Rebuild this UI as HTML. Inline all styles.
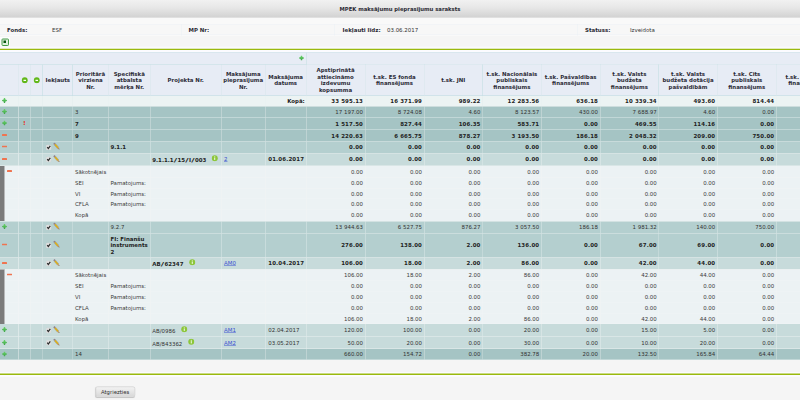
<!DOCTYPE html><html lang="lv"><head><meta charset="utf-8"><title>MPEK maksājumu pieprasījumu saraksts</title><style>
html,body{margin:0;padding:0;background:#f4f4f4;}
body{width:800px;height:400px;overflow:hidden;position:relative;font-family:"DejaVu Sans","Liberation Sans",sans-serif;}
#w{position:absolute;left:0;top:0;width:1600px;height:800px;transform:scale(0.5);transform-origin:0 0;font-size:10.9px;color:#333;overflow:hidden;background:#f5f5f5;}
#tb{position:absolute;left:0;top:0;width:1600px;height:35px;font-size:10.6px;background:linear-gradient(#f1f1f1,#e7e7e7 45%,#d3d3d3);border-bottom:1px solid #cbcbcb;box-sizing:border-box;text-align:center;font-weight:bold;line-height:35px;color:#2a2a33;}
#fl{position:absolute;left:0;top:36px;width:1600px;height:62px;background:linear-gradient(#f9f9f9,#f9f9f9 35px,#f5f5f5 36px);}
#fr{position:absolute;left:0;top:12px;width:1600px;height:22px;box-sizing:border-box;border-top:1px solid #edf1f6;border-bottom:1px solid #edf1f6;background:#f7f7f7}
#fl span{position:absolute;top:16px;line-height:16px;white-space:nowrap;}
#fl b{color:#2a2a33}
.vd{position:absolute;top:12px;width:1px;height:23px;background:#eaf0f5;}
#icb{position:absolute;left:0;top:74px;width:20px;height:19px;background:#fdfdfd}
#ic{position:absolute;left:2.5px;top:77px;width:15px;height:14.5px;box-sizing:border-box;border:2.6px solid #449a49;background:#dff0df;border-radius:2.5px;}
#ic i{position:absolute;left:2.6px;top:2.4px;width:4.6px;height:4.6px;background:#07560f;}
.gl{position:absolute;left:0;width:1600px;height:3.5px;background:#9ab90e;}
table{position:absolute;left:0;top:104px;border-collapse:separate;border-spacing:0;table-layout:fixed;width:1675px;}
td,th{padding:0;margin:0;box-sizing:border-box;overflow:hidden;border-right:1px solid rgba(255,255,255,.42);border-bottom:1px solid rgba(255,255,255,.62);line-height:13px;vertical-align:middle;white-space:nowrap;font-weight:normal;}
th{background:#e7ecf5;font-weight:bold;text-align:center;color:#2b2b36;border-right:1px solid #bddce0;border-bottom:1px solid #badadf;}
tr.h2 th{padding-top:1px}
tr.h1 th{border-bottom:1px solid #bddce0;border-top:1px solid #cbe3e7;}
td.n{text-align:right;padding-right:3.5px;}
td.t{text-align:left;padding-left:4px;}
tr.b td{font-weight:bold;color:#222;}
tr.tot td{background:#ecf3f3;border-right-color:#e2edee;}
tr.l1 td{background:#a5c4c4;}
tr.l2 td{background:#b4cfcf;}
tr.l3 td{background:#c7dbdb;}
tr.d td{background:#ecf2f4;border-right-color:rgba(255,255,255,.25);border-bottom-color:rgba(255,255,255,.25);color:#3a3a3a;}
td.e{position:relative;}
.pl{position:absolute;left:3.5px;top:50%;margin-top:-6.2px;}
.mi{position:absolute;left:3.5px;top:50%;margin-top:-3px;}
tr.d .mi{left:13.5px;}
.bar{position:absolute;left:0;width:9.5px;background:#7b7b7b;border-right:1px solid #f4f7f8;box-sizing:border-box}
.cb{position:absolute;left:5.5px;top:50%;margin-top:-5.5px}
.pe{position:absolute;left:19.5px;top:50%;margin-top:-9px}
.inf{display:inline-block;vertical-align:middle;margin:-6.5px 0 -6.5px 11px;position:relative;top:-4px}
.sl{display:inline-block;transform:scaleX(1.7);margin:0 1.9px}
td.p{padding-left:3.5px;padding-top:3px}
.ci{display:inline-block;vertical-align:middle;position:relative;left:0.6px;top:-0.5px}
.ex{color:#e8301c;font-weight:bold;font-size:12px;position:relative;top:-1px}
td.c{text-align:center}
a{color:#3a50d0;text-decoration:underline;font-weight:normal}
tr.b td.n,tr.b td.dt{letter-spacing:0.28px}
td.dt{padding-left:5.5px}
td.lk{padding-left:5px}
.r{display:block;text-align:right;padding-right:2px}
#btn{position:absolute;left:191px;top:772.5px;width:78.5px;height:21px;box-sizing:border-box;border:1px solid #c2c2c2;border-radius:4px;background:linear-gradient(#f3f3f3,#d8d8d8);text-align:center;line-height:19px;font-size:10.6px;color:#2e2e2e;box-shadow:0 1px 1.5px rgba(0,0,0,.2);}
</style></head><body><div id="w">
<svg width="0" height="0" style="position:absolute"><defs><linearGradient id="gp" x1="0" y1="0" x2="0" y2="1"><stop offset="0" stop-color="#6ad46a"/><stop offset="1" stop-color="#3fa548"/></linearGradient></defs></svg>
<div id="tb">MPEK maksājumu pieprasījumu saraksts</div>
<div id="fl"><div id="fr"></div><span style="left:14px"><b>Fonds:</b></span><span style="left:104px">ESF</span><span style="left:377px"><b>MP Nr:</b></span><span style="left:685px"><b>Iekļauti līdz:</b></span><span style="left:774px">03.06.2017</span><span style="left:1170px"><b>Statuss:</b></span><span style="left:1260px">Izveidota</span><div class="vd" style="left:362px"></div><div class="vd" style="left:669px"></div><div class="vd" style="left:1154px"></div></div>
<div id="icb"></div><div id="ic"><i></i></div>
<div class="gl" style="top:97.1px;height:3px"></div><div style="position:absolute;left:0;top:100.1px;width:1600px;height:4px;background:#fbfbff"></div><div style="position:absolute;left:0;top:93px;width:1600px;height:4.1px;background:#fafafc"></div>
<table><colgroup><col style="width:37px"><col style="width:24px"><col style="width:25px"><col style="width:60px"><col style="width:71px"><col style="width:84px"><col style="width:142px"><col style="width:88px"><col style="width:81.5px"><col style="width:118px"><col style="width:118px"><col style="width:117px"><col style="width:117.5px"><col style="width:117.5px"><col style="width:117.5px"><col style="width:117px"><col style="width:118px"><col style="width:122px"></colgroup>
<tr class="h1" style="height:25px"><th colspan="9" style="position:relative"><svg style="position:absolute;left:598px;top:6px" width="10" height="10" viewBox="0 0 10 10"><path d="M3.8 0.2h2.4l0.6 3 3 0.6v2.4l-3 0.6-0.6 3H3.8l-0.6-3-3-0.6V3.8l3-0.6z" fill="url(#gp)"/></svg></th><th colspan="9"></th></tr>
<tr class="h2" style="height:62.5px"><th></th><th><svg class="ci" width="13" height="13" viewBox="0 0 13 13"><circle cx="6.5" cy="6.5" r="5.9" fill="#62b81a"/><rect x="3.9" y="5.4" width="5.2" height="2.4" rx="0.6" fill="#fff"/></svg></th><th><svg class="ci" width="13" height="13" viewBox="0 0 13 13"><circle cx="6.5" cy="6.5" r="5.9" fill="#62b81a"/><rect x="3.9" y="5.4" width="5.2" height="2.4" rx="0.6" fill="#fff"/></svg></th><th>Iekļauts</th><th>Prioritārā<br>virziena<br>Nr.</th><th>Specifiskā<br>atbalsta<br>mērķa Nr.</th><th>Projekta Nr.</th><th>Maksājuma<br>pieprasījuma<br>Nr.</th><th>Maksājuma<br>datums</th><th>Apstiprinātā<br>attiecināmo<br>izdevumu<br>kopsumma</th><th>t.sk. ES fonda<br>finansējums</th><th>t.sk. JNI</th><th>t.sk. Nacionālais<br>publiskais<br>finansējums</th><th>t.sk. Pašvaldības<br>finansējums</th><th>t.sk. Valsts<br>budžeta<br>finansējums</th><th>t.sk. Valsts<br>budžeta dotācija<br>pašvaldībām</th><th>t.sk. Cits<br>publiskais<br>finansējums</th><th>t.sk. Privātais<br>finansējums</th></tr>
<tr class="tot b" style="height:21.5px"><td class="e"><svg class="pl" width="10" height="10" viewBox="0 0 10 10"><path d="M3.8 0.2h2.4l0.6 3 3 0.6v2.4l-3 0.6-0.6 3H3.8l-0.6-3-3-0.6V3.8l3-0.6z" fill="url(#gp)"/></svg></td><td class="c"></td><td></td><td class="e"></td><td class="t"></td><td class="t"></td><td class="t p"></td><td class="t lk"></td><td><span class="r">Kopā:</span></td><td class="n">33 595.13</td><td class="n">16 371.99</td><td class="n">989.22</td><td class="n">12 283.56</td><td class="n">636.18</td><td class="n">10 339.34</td><td class="n">493.60</td><td class="n">814.44</td><td class="n"></td></tr>
<tr class="l1" style="height:23px"><td class="e"><svg class="pl" width="10" height="10" viewBox="0 0 10 10"><path d="M3.8 0.2h2.4l0.6 3 3 0.6v2.4l-3 0.6-0.6 3H3.8l-0.6-3-3-0.6V3.8l3-0.6z" fill="url(#gp)"/></svg></td><td class="c"></td><td></td><td class="e"></td><td class="t">3</td><td class="t"></td><td class="t p"></td><td class="t lk"></td><td class="t dt"></td><td class="n">17 197.00</td><td class="n">8 724.08</td><td class="n">4.60</td><td class="n">8 123.57</td><td class="n">430.00</td><td class="n">7 688.97</td><td class="n">4.60</td><td class="n">0.00</td><td class="n"></td></tr>
<tr class="l1 b" style="height:24px"><td class="e"><svg class="pl" width="10" height="10" viewBox="0 0 10 10"><path d="M3.8 0.2h2.4l0.6 3 3 0.6v2.4l-3 0.6-0.6 3H3.8l-0.6-3-3-0.6V3.8l3-0.6z" fill="url(#gp)"/></svg></td><td class="c"><span class="ex">!</span></td><td></td><td class="e"></td><td class="t">7</td><td class="t"></td><td class="t p"></td><td class="t lk"></td><td class="t dt"></td><td class="n">1 517.50</td><td class="n">827.44</td><td class="n">106.35</td><td class="n">583.71</td><td class="n">0.00</td><td class="n">469.55</td><td class="n">114.16</td><td class="n">0.00</td><td class="n"></td></tr>
<tr class="l1 b" style="height:23px"><td class="e"><svg class="mi" width="10" height="4" viewBox="0 0 10 4"><rect x="0" y="0" width="10" height="3.8" rx="1" fill="#ef7450"/></svg></td><td class="c"></td><td></td><td class="e"></td><td class="t">9</td><td class="t"></td><td class="t p"></td><td class="t lk"></td><td class="t dt"></td><td class="n">14 220.63</td><td class="n">6 665.75</td><td class="n">878.27</td><td class="n">3 193.50</td><td class="n">186.18</td><td class="n">2 048.32</td><td class="n">209.00</td><td class="n">750.00</td><td class="n"></td></tr>
<tr class="l2 b" style="height:23.5px"><td class="e"><svg class="mi" width="10" height="4" viewBox="0 0 10 4"><rect x="0" y="0" width="10" height="3.8" rx="1" fill="#ef7450"/></svg></td><td class="c"></td><td></td><td class="e"><svg class="cb" width="11" height="11" viewBox="0 0 11 11"><rect x="0.25" y="0.25" width="10.5" height="10.5" rx="2" fill="#dfdfdf" stroke="#cfd6d6" stroke-width="0.5"/><path d="M2.4 5.4l2.2 2.6 4-5.4" fill="none" stroke="#2b2b2b" stroke-width="2.4"/></svg><svg class="pe" width="14" height="15" viewBox="0 0 14 15"><g transform="translate(2.2,1.8) rotate(48.8)"><rect x="-0.5" y="-1.8" width="3" height="3.6" fill="#93808a"/><rect x="2.5" y="-1.9" width="9.3" height="3.8" fill="#e6bc1e" stroke="#7f8cb4" stroke-width="0.7"/><rect x="2.5" y="-0.5" width="9.3" height="1" fill="#d59a10"/><path d="M11.8 -1.9L16 0 11.8 1.9z" fill="#c79a62"/><path d="M14.3 -0.9L16 0 14.3 0.9z" fill="#444"/></g></svg></td><td class="t"></td><td class="t">9.1.1</td><td class="t p"></td><td class="t lk"></td><td class="t dt"></td><td class="n">0.00</td><td class="n">0.00</td><td class="n">0.00</td><td class="n">0.00</td><td class="n">0.00</td><td class="n">0.00</td><td class="n">0.00</td><td class="n">0.00</td><td class="n"></td></tr>
<tr class="l3 b" style="height:25.5px"><td class="e"><svg class="mi" width="10" height="4" viewBox="0 0 10 4"><rect x="0" y="0" width="10" height="3.8" rx="1" fill="#ef7450"/></svg></td><td class="c"></td><td></td><td class="e"><svg class="cb" width="11" height="11" viewBox="0 0 11 11"><rect x="0.25" y="0.25" width="10.5" height="10.5" rx="2" fill="#dfdfdf" stroke="#cfd6d6" stroke-width="0.5"/><path d="M2.4 5.4l2.2 2.6 4-5.4" fill="none" stroke="#2b2b2b" stroke-width="2.4"/></svg><svg class="pe" width="14" height="15" viewBox="0 0 14 15"><g transform="translate(2.2,1.8) rotate(48.8)"><rect x="-0.5" y="-1.8" width="3" height="3.6" fill="#93808a"/><rect x="2.5" y="-1.9" width="9.3" height="3.8" fill="#e6bc1e" stroke="#7f8cb4" stroke-width="0.7"/><rect x="2.5" y="-0.5" width="9.3" height="1" fill="#d59a10"/><path d="M11.8 -1.9L16 0 11.8 1.9z" fill="#c79a62"/><path d="M14.3 -0.9L16 0 14.3 0.9z" fill="#444"/></g></svg></td><td class="t"></td><td class="t"></td><td class="t p">9.1.1.1<span class="sl">/</span>15<span class="sl">/</span>I<span class="sl">/</span>003<svg class="inf" width="13" height="13" viewBox="0 0 13 13"><circle cx="6.5" cy="6.5" r="6" fill="#8cc63a"/><rect x="5.6" y="5.2" width="1.8" height="4.6" fill="#fff"/><rect x="5.6" y="2.8" width="1.8" height="1.7" fill="#fff"/></svg></td><td class="t lk"><a>2</a></td><td class="t dt">01.06.2017</td><td class="n">0.00</td><td class="n">0.00</td><td class="n">0.00</td><td class="n">0.00</td><td class="n">0.00</td><td class="n">0.00</td><td class="n">0.00</td><td class="n">0.00</td><td class="n"></td></tr>
<tr class="d" style="height:23px"><td class="e"><svg class="mi" width="10" height="4" viewBox="0 0 10 4"><rect x="0" y="0" width="10" height="3.8" rx="1" fill="#ef7450"/></svg></td><td class="c"></td><td></td><td class="e"></td><td class="t">Sākotnējais</td><td class="t"></td><td class="t p"></td><td class="t lk"></td><td class="t dt"></td><td class="n">0.00</td><td class="n">0.00</td><td class="n">0.00</td><td class="n">0.00</td><td class="n">0.00</td><td class="n">0.00</td><td class="n">0.00</td><td class="n">0.00</td><td class="n"></td></tr>
<tr class="d" style="height:21.7px"><td class="e"></td><td class="c"></td><td></td><td class="e"></td><td class="t">SEI</td><td class="t">Pamatojums:</td><td class="t p"></td><td class="t lk"></td><td class="t dt"></td><td class="n">0.00</td><td class="n">0.00</td><td class="n">0.00</td><td class="n">0.00</td><td class="n">0.00</td><td class="n">0.00</td><td class="n">0.00</td><td class="n">0.00</td><td class="n"></td></tr>
<tr class="d" style="height:21.7px"><td class="e"></td><td class="c"></td><td></td><td class="e"></td><td class="t">VI</td><td class="t">Pamatojums:</td><td class="t p"></td><td class="t lk"></td><td class="t dt"></td><td class="n">0.00</td><td class="n">0.00</td><td class="n">0.00</td><td class="n">0.00</td><td class="n">0.00</td><td class="n">0.00</td><td class="n">0.00</td><td class="n">0.00</td><td class="n"></td></tr>
<tr class="d" style="height:21.7px"><td class="e"></td><td class="c"></td><td></td><td class="e"></td><td class="t">CFLA</td><td class="t">Pamatojums:</td><td class="t p"></td><td class="t lk"></td><td class="t dt"></td><td class="n">0.00</td><td class="n">0.00</td><td class="n">0.00</td><td class="n">0.00</td><td class="n">0.00</td><td class="n">0.00</td><td class="n">0.00</td><td class="n">0.00</td><td class="n"></td></tr>
<tr class="d" style="height:22.5px"><td class="e"></td><td class="c"></td><td></td><td class="e"></td><td class="t">Kopā</td><td class="t"></td><td class="t p"></td><td class="t lk"></td><td class="t dt"></td><td class="n">0.00</td><td class="n">0.00</td><td class="n">0.00</td><td class="n">0.00</td><td class="n">0.00</td><td class="n">0.00</td><td class="n">0.00</td><td class="n">0.00</td><td class="n"></td></tr>
<tr class="l2" style="height:24px"><td class="e"><svg class="pl" width="10" height="10" viewBox="0 0 10 10"><path d="M3.8 0.2h2.4l0.6 3 3 0.6v2.4l-3 0.6-0.6 3H3.8l-0.6-3-3-0.6V3.8l3-0.6z" fill="url(#gp)"/></svg></td><td class="c"></td><td></td><td class="e"><svg class="cb" width="11" height="11" viewBox="0 0 11 11"><rect x="0.25" y="0.25" width="10.5" height="10.5" rx="2" fill="#dfdfdf" stroke="#cfd6d6" stroke-width="0.5"/><path d="M2.4 5.4l2.2 2.6 4-5.4" fill="none" stroke="#2b2b2b" stroke-width="2.4"/></svg><svg class="pe" width="14" height="15" viewBox="0 0 14 15"><g transform="translate(2.2,1.8) rotate(48.8)"><rect x="-0.5" y="-1.8" width="3" height="3.6" fill="#93808a"/><rect x="2.5" y="-1.9" width="9.3" height="3.8" fill="#e6bc1e" stroke="#7f8cb4" stroke-width="0.7"/><rect x="2.5" y="-0.5" width="9.3" height="1" fill="#d59a10"/><path d="M11.8 -1.9L16 0 11.8 1.9z" fill="#c79a62"/><path d="M14.3 -0.9L16 0 14.3 0.9z" fill="#444"/></g></svg></td><td class="t"></td><td class="t">9.2.7</td><td class="t p"></td><td class="t lk"></td><td class="t dt"></td><td class="n">13 944.63</td><td class="n">6 527.75</td><td class="n">876.27</td><td class="n">3 057.50</td><td class="n">186.18</td><td class="n">1 981.32</td><td class="n">140.00</td><td class="n">750.00</td><td class="n"></td></tr>
<tr class="l2 b" style="height:48.5px"><td class="e"><svg class="mi" width="10" height="4" viewBox="0 0 10 4"><rect x="0" y="0" width="10" height="3.8" rx="1" fill="#ef7450"/></svg></td><td class="c"></td><td></td><td class="e"><svg class="cb" width="11" height="11" viewBox="0 0 11 11"><rect x="0.25" y="0.25" width="10.5" height="10.5" rx="2" fill="#dfdfdf" stroke="#cfd6d6" stroke-width="0.5"/><path d="M2.4 5.4l2.2 2.6 4-5.4" fill="none" stroke="#2b2b2b" stroke-width="2.4"/></svg><svg class="pe" width="14" height="15" viewBox="0 0 14 15"><g transform="translate(2.2,1.8) rotate(48.8)"><rect x="-0.5" y="-1.8" width="3" height="3.6" fill="#93808a"/><rect x="2.5" y="-1.9" width="9.3" height="3.8" fill="#e6bc1e" stroke="#7f8cb4" stroke-width="0.7"/><rect x="2.5" y="-0.5" width="9.3" height="1" fill="#d59a10"/><path d="M11.8 -1.9L16 0 11.8 1.9z" fill="#c79a62"/><path d="M14.3 -0.9L16 0 14.3 0.9z" fill="#444"/></g></svg></td><td class="t"></td><td class="t">FI: Finanšu<br>instruments<br>2</td><td class="t p"></td><td class="t lk"></td><td class="t dt"></td><td class="n">276.00</td><td class="n">138.00</td><td class="n">2.00</td><td class="n">136.00</td><td class="n">0.00</td><td class="n">67.00</td><td class="n">69.00</td><td class="n">0.00</td><td class="n"></td></tr>
<tr class="l3 b" style="height:24px"><td class="e"><svg class="mi" width="10" height="4" viewBox="0 0 10 4"><rect x="0" y="0" width="10" height="3.8" rx="1" fill="#ef7450"/></svg></td><td class="c"></td><td></td><td class="e"><svg class="cb" width="11" height="11" viewBox="0 0 11 11"><rect x="0.25" y="0.25" width="10.5" height="10.5" rx="2" fill="#dfdfdf" stroke="#cfd6d6" stroke-width="0.5"/><path d="M2.4 5.4l2.2 2.6 4-5.4" fill="none" stroke="#2b2b2b" stroke-width="2.4"/></svg><svg class="pe" width="14" height="15" viewBox="0 0 14 15"><g transform="translate(2.2,1.8) rotate(48.8)"><rect x="-0.5" y="-1.8" width="3" height="3.6" fill="#93808a"/><rect x="2.5" y="-1.9" width="9.3" height="3.8" fill="#e6bc1e" stroke="#7f8cb4" stroke-width="0.7"/><rect x="2.5" y="-0.5" width="9.3" height="1" fill="#d59a10"/><path d="M11.8 -1.9L16 0 11.8 1.9z" fill="#c79a62"/><path d="M14.3 -0.9L16 0 14.3 0.9z" fill="#444"/></g></svg></td><td class="t"></td><td class="t"></td><td class="t p">AB<span class="sl">/</span>62347<svg class="inf" width="13" height="13" viewBox="0 0 13 13"><circle cx="6.5" cy="6.5" r="6" fill="#8cc63a"/><rect x="5.6" y="5.2" width="1.8" height="4.6" fill="#fff"/><rect x="5.6" y="2.8" width="1.8" height="1.7" fill="#fff"/></svg></td><td class="t lk"><a>AM0</a></td><td class="t dt">10.04.2017</td><td class="n">106.00</td><td class="n">18.00</td><td class="n">2.00</td><td class="n">86.00</td><td class="n">0.00</td><td class="n">42.00</td><td class="n">44.00</td><td class="n">0.00</td><td class="n"></td></tr>
<tr class="d" style="height:23px"><td class="e"><svg class="mi" width="10" height="4" viewBox="0 0 10 4"><rect x="0" y="0" width="10" height="3.8" rx="1" fill="#ef7450"/></svg></td><td class="c"></td><td></td><td class="e"></td><td class="t">Sākotnējais</td><td class="t"></td><td class="t p"></td><td class="t lk"></td><td class="t dt"></td><td class="n">106.00</td><td class="n">18.00</td><td class="n">2.00</td><td class="n">86.00</td><td class="n">0.00</td><td class="n">42.00</td><td class="n">44.00</td><td class="n">0.00</td><td class="n"></td></tr>
<tr class="d" style="height:21.9px"><td class="e"></td><td class="c"></td><td></td><td class="e"></td><td class="t">SEI</td><td class="t">Pamatojums:</td><td class="t p"></td><td class="t lk"></td><td class="t dt"></td><td class="n">0.00</td><td class="n">0.00</td><td class="n">0.00</td><td class="n">0.00</td><td class="n">0.00</td><td class="n">0.00</td><td class="n">0.00</td><td class="n">0.00</td><td class="n"></td></tr>
<tr class="d" style="height:21.9px"><td class="e"></td><td class="c"></td><td></td><td class="e"></td><td class="t">VI</td><td class="t">Pamatojums:</td><td class="t p"></td><td class="t lk"></td><td class="t dt"></td><td class="n">0.00</td><td class="n">0.00</td><td class="n">0.00</td><td class="n">0.00</td><td class="n">0.00</td><td class="n">0.00</td><td class="n">0.00</td><td class="n">0.00</td><td class="n"></td></tr>
<tr class="d" style="height:21.9px"><td class="e"></td><td class="c"></td><td></td><td class="e"></td><td class="t">CFLA</td><td class="t">Pamatojums:</td><td class="t p"></td><td class="t lk"></td><td class="t dt"></td><td class="n">0.00</td><td class="n">0.00</td><td class="n">0.00</td><td class="n">0.00</td><td class="n">0.00</td><td class="n">0.00</td><td class="n">0.00</td><td class="n">0.00</td><td class="n"></td></tr>
<tr class="d" style="height:20.3px"><td class="e"></td><td class="c"></td><td></td><td class="e"></td><td class="t">Kopā</td><td class="t"></td><td class="t p"></td><td class="t lk"></td><td class="t dt"></td><td class="n">106.00</td><td class="n">18.00</td><td class="n">2.00</td><td class="n">86.00</td><td class="n">0.00</td><td class="n">42.00</td><td class="n">44.00</td><td class="n">0.00</td><td class="n"></td></tr>
<tr class="l3" style="height:26px"><td class="e"><svg class="pl" width="10" height="10" viewBox="0 0 10 10"><path d="M3.8 0.2h2.4l0.6 3 3 0.6v2.4l-3 0.6-0.6 3H3.8l-0.6-3-3-0.6V3.8l3-0.6z" fill="url(#gp)"/></svg></td><td class="c"></td><td></td><td class="e"><svg class="cb" width="11" height="11" viewBox="0 0 11 11"><rect x="0.25" y="0.25" width="10.5" height="10.5" rx="2" fill="#dfdfdf" stroke="#cfd6d6" stroke-width="0.5"/><path d="M2.4 5.4l2.2 2.6 4-5.4" fill="none" stroke="#2b2b2b" stroke-width="2.4"/></svg><svg class="pe" width="14" height="15" viewBox="0 0 14 15"><g transform="translate(2.2,1.8) rotate(48.8)"><rect x="-0.5" y="-1.8" width="3" height="3.6" fill="#93808a"/><rect x="2.5" y="-1.9" width="9.3" height="3.8" fill="#e6bc1e" stroke="#7f8cb4" stroke-width="0.7"/><rect x="2.5" y="-0.5" width="9.3" height="1" fill="#d59a10"/><path d="M11.8 -1.9L16 0 11.8 1.9z" fill="#c79a62"/><path d="M14.3 -0.9L16 0 14.3 0.9z" fill="#444"/></g></svg></td><td class="t"></td><td class="t"></td><td class="t p">AB/0986<svg class="inf" width="13" height="13" viewBox="0 0 13 13"><circle cx="6.5" cy="6.5" r="6" fill="#8cc63a"/><rect x="5.6" y="5.2" width="1.8" height="4.6" fill="#fff"/><rect x="5.6" y="2.8" width="1.8" height="1.7" fill="#fff"/></svg></td><td class="t lk"><a>AM1</a></td><td class="t dt">02.04.2017</td><td class="n">120.00</td><td class="n">100.00</td><td class="n">0.00</td><td class="n">20.00</td><td class="n">0.00</td><td class="n">15.00</td><td class="n">5.00</td><td class="n">0.00</td><td class="n"></td></tr>
<tr class="l3" style="height:24.4px"><td class="e"><svg class="pl" width="10" height="10" viewBox="0 0 10 10"><path d="M3.8 0.2h2.4l0.6 3 3 0.6v2.4l-3 0.6-0.6 3H3.8l-0.6-3-3-0.6V3.8l3-0.6z" fill="url(#gp)"/></svg></td><td class="c"></td><td></td><td class="e"><svg class="cb" width="11" height="11" viewBox="0 0 11 11"><rect x="0.25" y="0.25" width="10.5" height="10.5" rx="2" fill="#dfdfdf" stroke="#cfd6d6" stroke-width="0.5"/><path d="M2.4 5.4l2.2 2.6 4-5.4" fill="none" stroke="#2b2b2b" stroke-width="2.4"/></svg><svg class="pe" width="14" height="15" viewBox="0 0 14 15"><g transform="translate(2.2,1.8) rotate(48.8)"><rect x="-0.5" y="-1.8" width="3" height="3.6" fill="#93808a"/><rect x="2.5" y="-1.9" width="9.3" height="3.8" fill="#e6bc1e" stroke="#7f8cb4" stroke-width="0.7"/><rect x="2.5" y="-0.5" width="9.3" height="1" fill="#d59a10"/><path d="M11.8 -1.9L16 0 11.8 1.9z" fill="#c79a62"/><path d="M14.3 -0.9L16 0 14.3 0.9z" fill="#444"/></g></svg></td><td class="t"></td><td class="t"></td><td class="t p">AB/843362<svg class="inf" width="13" height="13" viewBox="0 0 13 13"><circle cx="6.5" cy="6.5" r="6" fill="#8cc63a"/><rect x="5.6" y="5.2" width="1.8" height="4.6" fill="#fff"/><rect x="5.6" y="2.8" width="1.8" height="1.7" fill="#fff"/></svg></td><td class="t lk"><a>AM2</a></td><td class="t dt">03.05.2017</td><td class="n">50.00</td><td class="n">20.00</td><td class="n">0.00</td><td class="n">30.00</td><td class="n">0.00</td><td class="n">10.00</td><td class="n">20.00</td><td class="n">0.00</td><td class="n"></td></tr>
<tr class="l1" style="height:22px"><td class="e"><svg class="pl" width="10" height="10" viewBox="0 0 10 10"><path d="M3.8 0.2h2.4l0.6 3 3 0.6v2.4l-3 0.6-0.6 3H3.8l-0.6-3-3-0.6V3.8l3-0.6z" fill="url(#gp)"/></svg></td><td class="c"></td><td></td><td class="e"></td><td class="t">14</td><td class="t"></td><td class="t p"></td><td class="t lk"></td><td class="t dt"></td><td class="n">660.00</td><td class="n">154.72</td><td class="n">0.00</td><td class="n">382.78</td><td class="n">20.00</td><td class="n">132.50</td><td class="n">165.84</td><td class="n">64.44</td><td class="n"></td></tr>
</table>
<div class="bar" style="top:332px;height:110.1px"></div>
<div class="bar" style="top:539.1px;height:108.5px"></div>
<div style="position:absolute;left:0;top:744px;width:1600px;height:9.5px;background:#fbfbfd"></div><div class="gl" style="top:747.3px;height:3px"></div>
<div id="btn">Atgriezties</div>
</div></body></html>
